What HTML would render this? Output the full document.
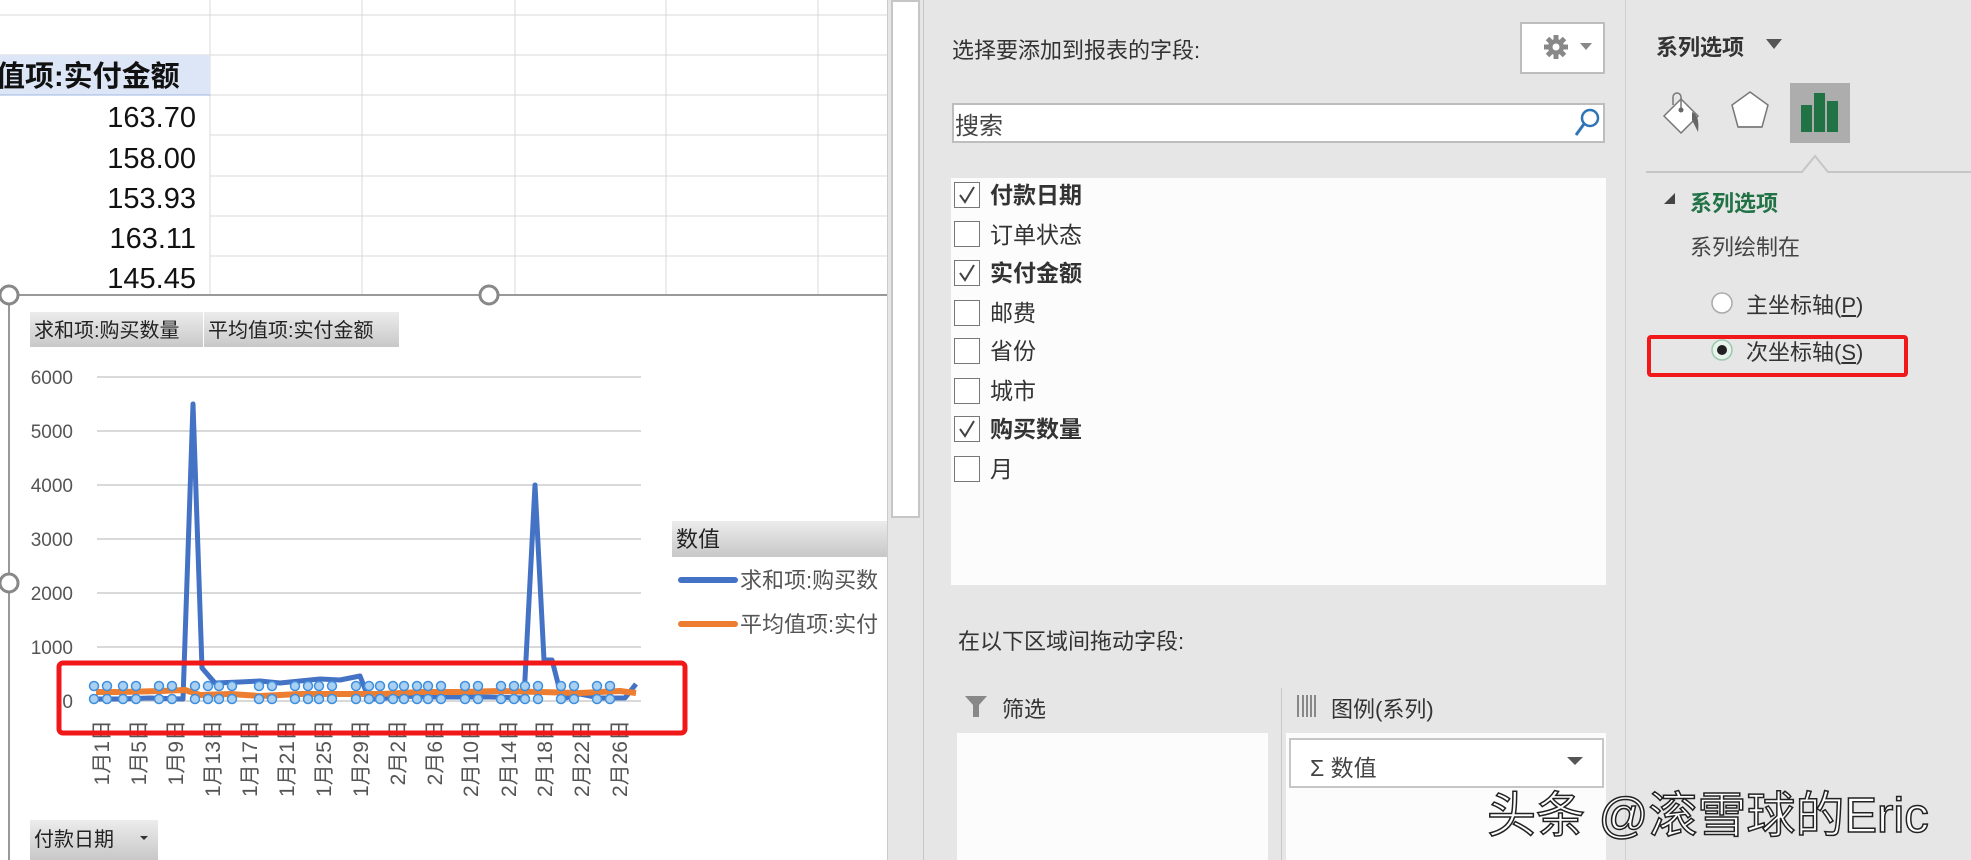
<!DOCTYPE html>
<html><head><meta charset="utf-8"><style>
*{margin:0;padding:0;box-sizing:border-box}
body{width:1971px;height:860px;overflow:hidden;background:#e6e6e6;font-family:"Liberation Sans","Noto Sans CJK SC",sans-serif;position:relative;color:#333}
.a{position:absolute}
.cb{position:absolute;left:954px;width:26px;height:26px;border:1.5px solid #777;background:#fff}
.it{position:absolute;left:990px;font-size:23px;line-height:30px}
</style></head><body>
<div class="a" style="left:0;top:0;width:887px;height:860px;background:#fff"></div>
<svg class="a" style="left:0;top:0" width="887" height="860">
<defs><linearGradient id="g" x1="0" y1="0" x2="0" y2="1"><stop offset="0" stop-color="#ececec"/><stop offset="1" stop-color="#c8c8c8"/></linearGradient>
<g id="m"><circle cx="0" cy="686" r="4.5"/><circle cx="13" cy="686" r="4.5"/><circle cx="0" cy="699" r="4.5"/><circle cx="13" cy="699" r="4.5"/></g></defs>
<g stroke="#d9d9d9" stroke-width="1">
<line x1="0" y1="15" x2="887" y2="15"/><line x1="0" y1="55" x2="887" y2="55"/><line x1="210" y1="95" x2="887" y2="95"/><line x1="210" y1="135" x2="887" y2="135"/><line x1="210" y1="176" x2="887" y2="176"/><line x1="210" y1="216" x2="887" y2="216"/><line x1="210" y1="256" x2="887" y2="256"/>
<line x1="210" y1="0" x2="210" y2="295"/><line x1="362" y1="0" x2="362" y2="295"/><line x1="515" y1="0" x2="515" y2="295"/><line x1="666" y1="0" x2="666" y2="295"/><line x1="818" y1="0" x2="818" y2="295"/>
</g>
<rect x="0" y="55" width="210" height="40" fill="#dce6f7"/>
<line x1="0" y1="95" x2="210" y2="95" stroke="#9bb6e0"/>
<text x="-4" y="86" font-size="29" font-weight="bold" fill="#111">值项:实付金额</text>
<g font-size="29" fill="#111" text-anchor="end"><text x="196" y="127">163.70</text><text x="196" y="168">158.00</text><text x="196" y="208">153.93</text><text x="196" y="248">163.11</text><text x="196" y="288">145.45</text></g>
<rect x="0" y="295" width="887" height="565" fill="#fff"/>
<line x1="9" y1="295" x2="887" y2="295" stroke="#999" stroke-width="2"/>
<line x1="9" y1="295" x2="9" y2="860" stroke="#999" stroke-width="2"/>
<g fill="#fff" stroke="#888" stroke-width="3"><circle cx="9" cy="295" r="9"/><circle cx="489" cy="295" r="9"/><circle cx="9" cy="583" r="9"/></g>
<rect x="30" y="312" width="173" height="35" fill="url(#g)"/><rect x="204" y="312" width="195" height="35" fill="url(#g)"/>
<text x="34" y="337" font-size="20" fill="#222">求和项:购买数量</text><text x="208" y="337" font-size="20" fill="#222">平均值项:实付金额</text>
<g stroke="#d9d9d9" stroke-width="2"><line x1="97" y1="377" x2="641" y2="377"/><line x1="97" y1="431" x2="641" y2="431"/><line x1="97" y1="485" x2="641" y2="485"/><line x1="97" y1="539" x2="641" y2="539"/><line x1="97" y1="593" x2="641" y2="593"/><line x1="97" y1="647" x2="641" y2="647"/><line x1="97" y1="701" x2="641" y2="701"/></g>
<g font-size="19" fill="#555" text-anchor="end"><text x="73" y="384">6000</text><text x="73" y="438">5000</text><text x="73" y="492">4000</text><text x="73" y="546">3000</text><text x="73" y="600">2000</text><text x="73" y="654">1000</text><text x="73" y="708">0</text></g>
<polyline fill="none" stroke="#4472c4" stroke-width="5" stroke-linejoin="round" points="92,699 120,699 150,698 183,699 193,404 202,668 215,683 240,682 260,681 280,683 300,681 320,679 340,680 360,676 369,699 380,699 400,696 430,697 460,697 490,697 524,698 535,485 544,660 552,660 562,699 580,694 600,698 625,698 636,684"/>
<polyline fill="none" stroke="#ed7d31" stroke-width="6" stroke-linejoin="round" points="96,692 120,692 160,691 185,690 200,695 230,694 260,696 300,694 340,694 380,694 420,692 460,692 500,691 540,692 580,693 620,691 636,693"/>
<g fill="#a9d0f0" stroke="#3f8fde" stroke-width="1.5">
<use href="#m" x="94"/><use href="#m" x="123"/><use href="#m" x="159"/><use href="#m" x="195"/><use href="#m" x="219"/><use href="#m" x="259"/><use href="#m" x="295"/><use href="#m" x="319"/><use href="#m" x="356"/><use href="#m" x="380"/><use href="#m" x="404"/><use href="#m" x="428"/><use href="#m" x="465"/><use href="#m" x="501"/><use href="#m" x="525"/><use href="#m" x="561"/><use href="#m" x="597"/>
</g>
<g font-size="21" fill="#555" text-anchor="end">
<text transform="translate(109,720) rotate(-90)">1月1日</text><text transform="translate(146,720) rotate(-90)">1月5日</text><text transform="translate(183,720) rotate(-90)">1月9日</text><text transform="translate(220,720) rotate(-90)">1月13日</text><text transform="translate(257,720) rotate(-90)">1月17日</text><text transform="translate(294,720) rotate(-90)">1月21日</text><text transform="translate(331,720) rotate(-90)">1月25日</text><text transform="translate(368,720) rotate(-90)">1月29日</text><text transform="translate(405,720) rotate(-90)">2月2日</text><text transform="translate(442,720) rotate(-90)">2月6日</text><text transform="translate(478,720) rotate(-90)">2月10日</text><text transform="translate(516,720) rotate(-90)">2月14日</text><text transform="translate(552,720) rotate(-90)">2月18日</text><text transform="translate(589,720) rotate(-90)">2月22日</text><text transform="translate(627,720) rotate(-90)">2月26日</text>
</g>
<rect x="59" y="663" width="626" height="70" rx="4" fill="none" stroke="#f01818" stroke-width="5"/>
<rect x="672" y="521" width="215" height="36" fill="url(#g)"/><text x="676" y="547" font-size="22" fill="#222">数值</text>
<line x1="681" y1="580" x2="735" y2="580" stroke="#4472c4" stroke-width="6" stroke-linecap="round"/><text x="740" y="588" font-size="22" fill="#555">求和项:购买数</text>
<line x1="681" y1="624" x2="735" y2="624" stroke="#ed7d31" stroke-width="6" stroke-linecap="round"/><text x="740" y="632" font-size="22" fill="#555">平均值项:实付</text>
<rect x="30" y="820" width="128" height="40" fill="url(#g)"/><text x="34" y="846" font-size="20" fill="#222">付款日期</text><path d="M140 836h8l-4 4z" fill="#333"/>
</svg>
<div class="a" style="left:887px;top:0;width:37px;height:860px;background:#e6e6e6;border-left:1px solid #ccc;border-right:1px solid #c6c6c6"></div>
<div class="a" style="left:891px;top:0;width:29px;height:518px;background:#fff;border:2px solid #c6c6c6"></div>
<div class="a" style="left:952px;top:33px;font-size:22px;color:#333">选择要添加到报表的字段:</div>
<div class="a" style="left:1520px;top:22px;width:85px;height:52px;background:#fff;border:2px solid #bdbdbd"></div>
<svg class="a" style="left:1540px;top:32px" width="60" height="32"><g fill="#888"><circle cx="16" cy="15" r="8"/><g stroke="#888" stroke-width="5"><line x1="16" y1="3" x2="16" y2="27"/><line x1="4" y1="15" x2="28" y2="15"/><line x1="7.5" y1="6.5" x2="24.5" y2="23.5"/><line x1="24.5" y1="6.5" x2="7.5" y2="23.5"/></g><circle cx="16" cy="15" r="3.5" fill="#fff"/><path d="M40 11h12l-6 7z"/></g></svg>
<div class="a" style="left:952px;top:103px;width:653px;height:40px;background:#fff;border:2px solid #bdbdbd"></div>
<div class="a" style="left:955px;top:106px;font-size:24px;color:#444">搜索</div>
<svg class="a" style="left:1572px;top:106px" width="30" height="34"><circle cx="18" cy="12" r="8" fill="none" stroke="#2e75b6" stroke-width="2.5"/><line x1="12" y1="18" x2="4" y2="29" stroke="#2e75b6" stroke-width="3"/></svg>
<div class="a" style="left:951px;top:178px;width:655px;height:407px;background:#fcfcfc"></div>
<div class="cb" style="top:182px"></div><div class="cb" style="top:221px"></div><div class="cb" style="top:260px"></div><div class="cb" style="top:300px"></div><div class="cb" style="top:338px"></div><div class="cb" style="top:378px"></div><div class="cb" style="top:416px"></div><div class="cb" style="top:456px"></div>
<svg class="a" style="left:954px;top:182px" width="26" height="270"><g fill="none" stroke="#444" stroke-width="2"><path d="M6 13l5 7 9-15"/><path d="M6 91l5 7 9-15"/><path d="M6 247l5 7 9-15"/></g></svg>
<div class="it" style="top:180px;font-weight:bold">付款日期</div>
<div class="it" style="top:220px">订单状态</div>
<div class="it" style="top:258px;font-weight:bold">实付金额</div>
<div class="it" style="top:298px">邮费</div>
<div class="it" style="top:336px">省份</div>
<div class="it" style="top:376px">城市</div>
<div class="it" style="top:414px;font-weight:bold">购买数量</div>
<div class="it" style="top:454px">月</div>
<div class="a" style="left:958px;top:624px;font-size:22px;color:#333">在以下区域间拖动字段:</div>
<svg class="a" style="left:964px;top:694px" width="26" height="26"><path d="M1 2h22l-8 9v12h-6v-12z" fill="#888"/></svg>
<div class="a" style="left:1002px;top:692px;font-size:22px;color:#333">筛选</div>
<div class="a" style="left:1281px;top:688px;width:1px;height:172px;background:#c8c8c8"></div>
<svg class="a" style="left:1296px;top:695px" width="22" height="22"><g stroke="#888" stroke-width="2"><line x1="2" y1="0" x2="2" y2="22"/><line x1="7" y1="0" x2="7" y2="22"/><line x1="11" y1="0" x2="11" y2="22"/><line x1="15" y1="0" x2="15" y2="22"/><line x1="19" y1="0" x2="19" y2="22"/></g></svg>
<div class="a" style="left:1331px;top:692px;font-size:22px;color:#333">图例(系列)</div>
<div class="a" style="left:957px;top:733px;width:311px;height:127px;background:#fcfcfc"></div>
<div class="a" style="left:1286px;top:733px;width:320px;height:127px;background:#fcfcfc"></div>
<div class="a" style="left:1289px;top:738px;width:315px;height:50px;background:#fff;border:2px solid #c6c6c6"></div>
<div class="a" style="left:1310px;top:749px;font-size:23px;color:#444">Σ 数值</div>
<svg class="a" style="left:1566px;top:755px" width="18" height="12"><path d="M1 2h16l-8 8z" fill="#555"/></svg>
<div class="a" style="left:1625px;top:0;width:1px;height:860px;background:#d0d0d0"></div>
<div class="a" style="left:1656px;top:30px;font-size:22px;font-weight:bold;color:#333">系列选项</div>
<svg class="a" style="left:1765px;top:38px" width="20" height="14"><path d="M1 1h16l-8 10z" fill="#555"/></svg>
<svg class="a" style="left:1640px;top:60px" width="331" height="130">
<path d="M24 56l17-17 17 17-17 17z" fill="#fff" stroke="#777" stroke-width="1.5"/><path d="M33 45v-8a4 4 0 0 1 8 0v13" fill="none" stroke="#777" stroke-width="1.5"/><circle cx="41" cy="50" r="2.5" fill="#666"/><path d="M52 52q8 3 6 20q-4-8-6-12z" fill="#666"/>
<path d="M110 32l18 13-6 22h-24l-6-22z" fill="#fff" stroke="#777" stroke-width="1.5"/><line x1="98" y1="67" x2="122" y2="67" stroke="#888" stroke-width="2"/>
<rect x="150" y="23" width="60" height="60" fill="#adadad"/>
<rect x="161" y="45" width="11" height="27" fill="#217346"/><rect x="174" y="33" width="11" height="39" fill="#217346"/><rect x="187" y="41" width="11" height="31" fill="#217346"/>
<path d="M6 112H162L175 96 188 112H331" fill="none" stroke="#c6c6c6" stroke-width="2"/>
</svg>
<svg class="a" style="left:1663px;top:192px" width="14" height="14"><path d="M12 1v11H1z" fill="#444"/></svg>
<div class="a" style="left:1690px;top:186px;font-size:22px;font-weight:bold;color:#217346">系列选项</div>
<div class="a" style="left:1690px;top:230px;font-size:22px;color:#444">系列绘制在</div>
<svg class="a" style="left:1708px;top:289px" width="30" height="76"><circle cx="14" cy="14" r="10" fill="#fff" stroke="#aaa" stroke-width="1.5"/><circle cx="14" cy="61" r="10" fill="#e8f3ec" stroke="#9cc9ad" stroke-width="1.5"/><circle cx="14" cy="61" r="5" fill="#222"/></svg>
<div class="a" style="left:1746px;top:288px;font-size:22px;color:#333">主坐标轴(<u>P</u>)</div>
<div class="a" style="left:1746px;top:335px;font-size:22px;color:#333">次坐标轴(<u>S</u>)</div>
<div class="a" style="left:1647px;top:335px;width:261px;height:42px;border:4px solid #f01818;border-radius:4px"></div>
<div class="a" style="left:1487px;top:776px;font-size:49px;color:#fff;-webkit-text-stroke:1.5px #222;letter-spacing:0px">头条 @滚雪球的Eric</div>
</body></html>
